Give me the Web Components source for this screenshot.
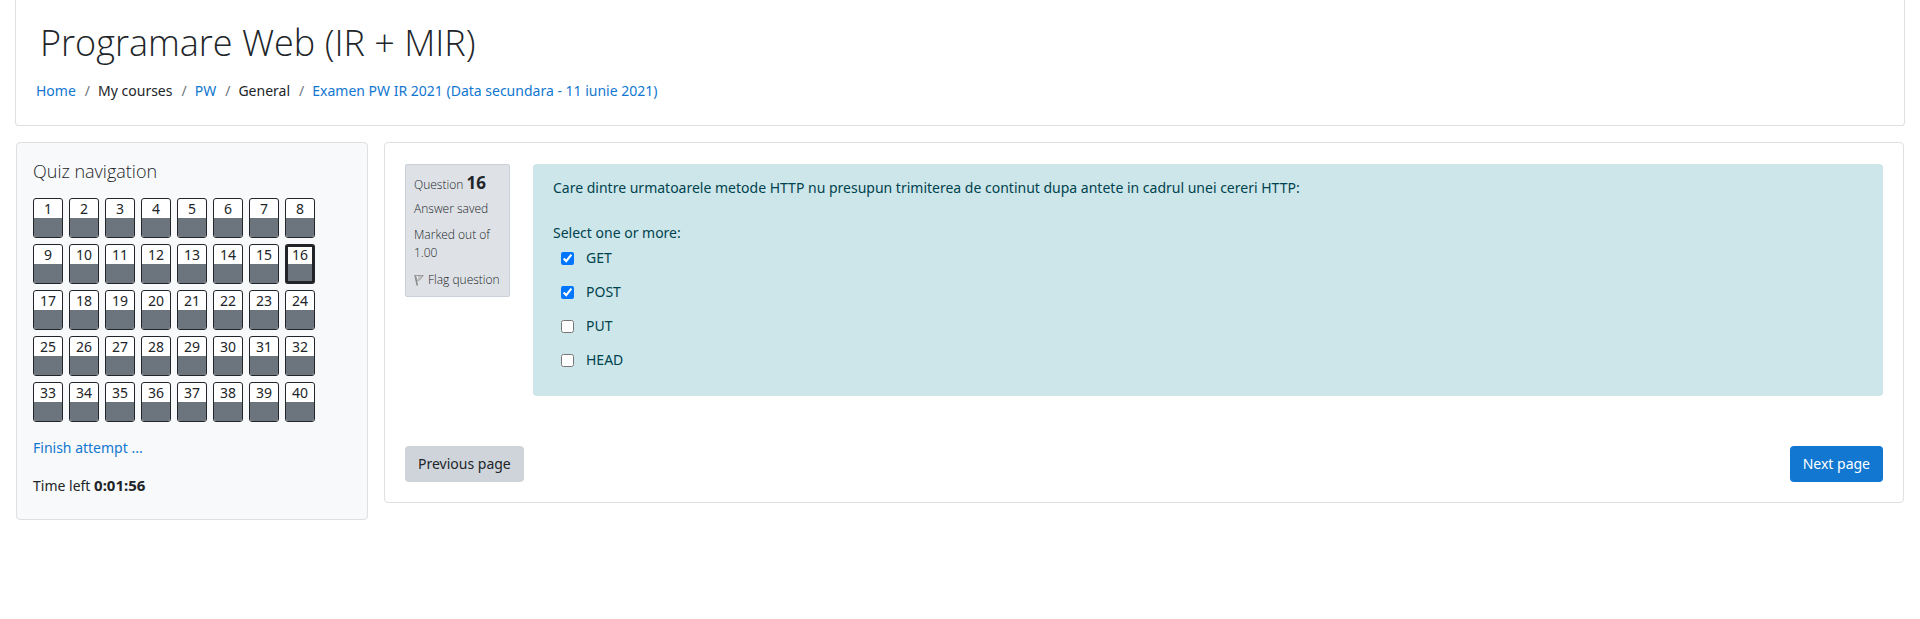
<!DOCTYPE html>
<html lang="en">
<head>
<meta charset="utf-8">
<title>Programare Web (IR + MIR)</title>
<style>
  body { margin: 0; background: #fff; color: #212529; font: 14px/22px "Noto Sans", "Open Sans", sans-serif; --link: #1177d1; --line: #dfdfdf; }
</style>
</head>
<body>
<quiz-page></quiz-page>

<script>
const define = (name, html, setup) => {
  const template = document.createElement('template');
  template.innerHTML = '<style>*{box-sizing:border-box}a{color:var(--link);text-decoration:none}</style>' + html;
  customElements.define(name, class extends HTMLElement {
    connectedCallback() {
      if (this.shadowRoot) return;
      const root = this.attachShadow({ mode: 'open' });
      root.append(template.content.cloneNode(true));
      if (setup) setup(this, root);
    }
  });
};

define('page-header', `
  <style>
    :host { display: block; box-sizing: border-box; padding: 16px 20px 22px; border: 1px solid var(--line); border-top: 0; border-radius: 0 0 4px 4px; }
    h1 { margin: 0 0 8px; padding-left: 4px; font: 300 36px/54px "Open Sans", sans-serif; }
    ol { display: flex; flex-wrap: wrap; margin: 0; padding: 0; list-style: none; line-height: 25px; }
    li + li::before { content: "/"; padding: 0 8px 0 9px; color: #6c757d; }
  </style>
  <h1><slot></slot></h1>
  <nav aria-label="Breadcrumb"><ol>
    <li><a href="#">Home</a></li>
    <li>My courses</li>
    <li><a href="#">PW</a></li>
    <li>General</li>
    <li><a href="#">Examen PW IR 2021 (Data secundara - 11 iunie 2021)</a></li>
  </ol></nav>`);

define('nav-button', `
  <style>
    :host { display: block; }
    a { display: flex; flex-direction: column; width: 30px; height: 40px; overflow: hidden; border: 1px solid #212529; border-radius: 3px; background: #fff; color: #212529; text-align: center; line-height: 19px; }
    a::after { content: ""; flex: 1; background: #6c757d; }
    :host([current]) a { border-width: 3px; line-height: 15px; }
    :host([current]) a::after { margin-top: 2px; }
  </style>
  <a href="#"><slot></slot></a>`);

define('quiz-navigation', `
  <style>
    :host { display: block; box-sizing: border-box; padding: 16px 16px 22px; border: 1px solid var(--line); border-radius: 4px; background: #f8f9fa; }
    h2 { margin: 0 0 14px; font: 300 18px/25px "Open Sans", sans-serif; }
    .grid { display: flex; flex-wrap: wrap; gap: 6px; max-width: 282px; }
    p { margin: 15px 0 0; }
    .time { font-size: 15px; }
  </style>
  <h2>Quiz navigation</h2>
  <div class="grid"></div>
  <p><a href="#">Finish attempt ...</a></p>
  <p>Time left <b class="time">0:01:56</b></p>`, (host, root) => {
  const grid = root.querySelector('.grid');
  for (let n = 1; n <= Number(host.getAttribute('count')); n++) {
    const button = document.createElement('nav-button');
    button.textContent = n;
    if (n === Number(host.getAttribute('current'))) button.setAttribute('current', '');
    grid.append(button);
  }
});

define('question-info', `
  <style>
    :host { display: block; box-sizing: border-box; padding: 7px 8px; border: 1px solid #cad0d7; border-radius: 2px; background: #dee2e6; font: 350 12px/18px "Open Sans", sans-serif; }
    h3 { margin: 0 0 4px; font: inherit; line-height: 22px; }
    h3 b { font: 700 17px/22px "Noto Sans", sans-serif; }
    p { margin: 0 0 8px; }
    a { display: flex; align-items: center; gap: 4px; margin-top: 9px; color: inherit; white-space: nowrap; }
  </style>
  <h3>Question <b><slot></slot></b></h3>
  <p>Answer saved</p>
  <p>Marked out of 1.00</p>
  <a href="#"><svg width="10" height="12" viewBox="0 0 10 12" aria-hidden="true"><path d="M1 1 3.3 11.5" fill="none" stroke="#888" stroke-width="1.5"/><path d="M1.3 1.5h8L5.5 6 3 6.3z" fill="#c4c6c8" stroke="#999" stroke-width="1"/><path d="M3 1.8 4 5.5" stroke="#eee" fill="none"/></svg>Flag question</a>`);

define('answer-option', `
  <style>
    :host { display: block; }
    label { display: flex; align-items: center; gap: 12px; padding: 0 8px; line-height: 22px; }
    input { width: 13px; height: 13px; margin: 0; accent-color: #0075ff; }
  </style>
  <label><input type="checkbox"><span><slot></slot></span></label>`, (host, root) => {
  root.querySelector('input').checked = host.hasAttribute('checked');
});

define('question-content', `
  <style>
    :host { display: block; box-sizing: border-box; padding: 13px 20px 25px; border-radius: 4px; background: #cde6ea; color: #00434e; }
    p { margin: 0 0 23px; }
    fieldset { margin: 0; padding: 0; border: 0; min-width: 0; }
    legend { padding: 0; margin-bottom: 3px; }
    .options { display: grid; gap: 12px; }
  </style>
  <p><slot name="text"></slot></p>
  <fieldset><legend>Select one or more:</legend><div class="options"><slot></slot></div></fieldset>`);

define('page-button', `
  <style>
    button { display: block; height: 36px; padding: 0 13px; border: 0; border-radius: 4px; background: #ced4da; color: #212529; font: inherit; }
    :host { display: block; }
    :host([primary]) button { background: var(--link); color: #fff; }
  </style>
  <button type="button"><slot></slot></button>`);

define('quiz-page', `
  <style>
    :host { display: block; padding: 0 15px; }
    .columns { display: grid; grid-template-columns: 352px minmax(0, 1fr); gap: 16px; align-items: start; margin: 16px 1px 0; }
    main { padding: 21px 20px 20px; border: 1px solid var(--line); border-radius: 4px; }
    .question { display: grid; grid-template-columns: 105px minmax(0, 1fr); gap: 23px; align-items: start; }
    .actions { display: flex; justify-content: space-between; margin-top: 50px; }
  </style>
  <page-header>Programare Web (IR + MIR)</page-header>
  <div class="columns">
    <quiz-navigation count="40" current="16"></quiz-navigation>
    <main>
      <div class="question">
        <question-info>16</question-info>
        <question-content>
          <span slot="text">Care dintre urmatoarele metode HTTP nu presupun trimiterea de continut dupa antete in cadrul unei cereri HTTP:</span>
          <answer-option checked>GET</answer-option>
          <answer-option checked>POST</answer-option>
          <answer-option>PUT</answer-option>
          <answer-option>HEAD</answer-option>
        </question-content>
      </div>
      <div class="actions">
        <page-button>Previous page</page-button>
        <page-button primary>Next page</page-button>
      </div>
    </main>
  </div>`);
</script>
</body>
</html>
